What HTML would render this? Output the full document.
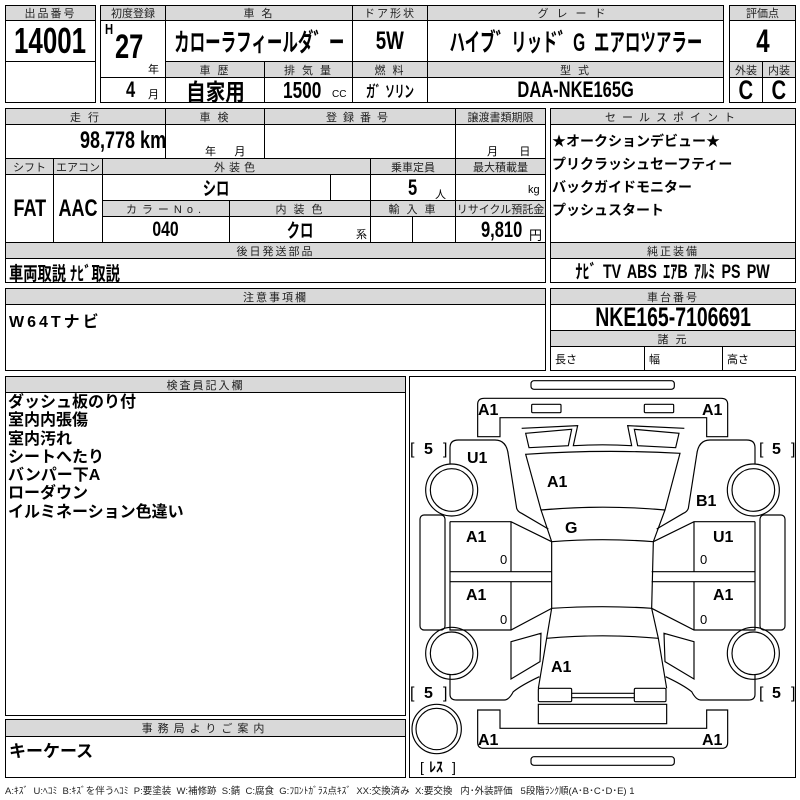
<!DOCTYPE html>
<html><head><meta charset="utf-8">
<style>
*{margin:0;padding:0;box-sizing:border-box}
body{width:800px;height:800px;background:#fff;position:relative;overflow:hidden;font-family:"Liberation Sans","Noto Sans CJK JP",sans-serif;color:#000}
.c{position:absolute;border:1px solid #000;background:#fff;display:flex;align-items:center;justify-content:center;white-space:nowrap;overflow:hidden}
.h{background:#d9d9d9;font-size:11px;color:#222;letter-spacing:2px;font-weight:normal}
.v{font-weight:bold}
.s{display:inline-block;transform:scaleX(0.75);transform-origin:center}
.t{position:absolute;white-space:nowrap}
.n{font-weight:bold;transform:scaleX(0.75);transform-origin:left center}
</style></head><body>

<div class="c h" style="left:5px;top:5px;width:91px;height:16px">出品番号</div>
<div class="c v" style="left:5px;top:20px;width:91px;height:42px;font-size:36px"><span class="s" style="transform:scaleX(0.72)">14001</span></div>
<div class="c" style="left:5px;top:61px;width:91px;height:42px"></div>

<div class="c h" style="left:100px;top:5px;width:66px;height:16px;letter-spacing:0">初度登録</div>
<div class="c h" style="left:165px;top:5px;width:188px;height:16px">車 名</div>
<div class="c h" style="left:352px;top:5px;width:76px;height:16px">ドア形状</div>
<div class="c h" style="left:427px;top:5px;width:297px;height:16px;letter-spacing:8px">グレード</div>
<div class="c" style="left:100px;top:20px;width:66px;height:58px"></div>
<div class="t n" style="left:105px;top:21px;font-size:15px">H</div>
<div class="t n" style="left:115px;top:28px;font-size:34px">27</div>
<div class="t" style="left:148px;top:61px;font-size:11px">年</div>
<div class="c v" style="left:165px;top:20px;width:188px;height:42px;font-size:25px"><span class="s" style="transform:scaleX(0.62)">カローラフィールダ゛ー</span></div>
<div class="c v" style="left:352px;top:20px;width:76px;height:42px;font-size:25px"><span class="s">5W</span></div>
<div class="c v" style="left:427px;top:20px;width:297px;height:42px;font-size:25px"><span class="s" style="transform:scaleX(0.62)">ハイブ゛リッド゛G&nbsp; エアロツアラー</span></div>
<div class="c h" style="left:165px;top:61px;width:100px;height:17px">車 歴</div>
<div class="c h" style="left:264px;top:61px;width:89px;height:17px">排 気 量</div>
<div class="c h" style="left:352px;top:61px;width:76px;height:17px">燃 料</div>
<div class="c h" style="left:427px;top:61px;width:297px;height:17px">型 式</div>
<div class="c" style="left:100px;top:77px;width:66px;height:26px"></div>
<div class="t n" style="left:126px;top:77px;font-size:22px">4</div>
<div class="t" style="left:148px;top:86px;font-size:11px">月</div>
<div class="c v" style="left:165px;top:77px;width:100px;height:26px;font-size:23px"><span class="s" style="transform:scaleX(0.85)">自家用</span></div>
<div class="c" style="left:264px;top:77px;width:89px;height:26px"></div>
<div class="t n" style="left:283px;top:77px;font-size:23px">1500</div>
<div class="t" style="left:332px;top:89px;font-size:10px">CC</div>
<div class="c v" style="left:352px;top:77px;width:76px;height:26px;font-size:16px"><span class="s" style="transform:scaleX(0.6)">ガ゛ソリン</span></div>
<div class="c v" style="left:427px;top:77px;width:297px;height:26px;font-size:22px"><span class="s">DAA-NKE165G</span></div>

<div class="c h" style="left:729px;top:5px;width:67px;height:16px;letter-spacing:0">評価点</div>
<div class="c v" style="left:729px;top:20px;width:67px;height:42px;font-size:32px"><span class="s">4</span></div>
<div class="c h" style="left:729px;top:61px;width:34px;height:17px;letter-spacing:0">外装</div>
<div class="c h" style="left:762px;top:61px;width:34px;height:17px;letter-spacing:0">内装</div>
<div class="c v" style="left:729px;top:77px;width:34px;height:26px;font-size:27px"><span class="s">C</span></div>
<div class="c v" style="left:762px;top:77px;width:34px;height:26px;font-size:27px"><span class="s">C</span></div>

<div class="c h" style="left:5px;top:108px;width:161px;height:17px">走 行</div>
<div class="c h" style="left:165px;top:108px;width:100px;height:17px">車 検</div>
<div class="c h" style="left:264px;top:108px;width:192px;height:17px;letter-spacing:6px">登録番号</div>
<div class="c h" style="left:455px;top:108px;width:91px;height:17px;letter-spacing:0">譲渡書類期限</div>
<div class="c" style="left:5px;top:124px;width:161px;height:35px"></div>
<div class="t n" style="left:80px;top:127px;font-size:24px">98,778 km</div>
<div class="c" style="left:165px;top:124px;width:100px;height:35px"></div>
<div class="t" style="left:205px;top:143px;font-size:11px">年&nbsp;&nbsp;&nbsp;&nbsp;&nbsp;&nbsp;月</div>
<div class="c" style="left:264px;top:124px;width:192px;height:35px"></div>
<div class="c" style="left:455px;top:124px;width:91px;height:35px"></div>
<div class="t" style="left:487px;top:143px;font-size:11px">月&nbsp;&nbsp;&nbsp;&nbsp;&nbsp;&nbsp;&nbsp;日</div>

<div class="c h" style="left:5px;top:158px;width:49px;height:17px;letter-spacing:0">シフト</div>
<div class="c h" style="left:53px;top:158px;width:50px;height:17px;letter-spacing:0">エアコン</div>
<div class="c h" style="left:102px;top:158px;width:269px;height:17px;letter-spacing:4px">外装色</div>
<div class="c h" style="left:370px;top:158px;width:86px;height:17px;letter-spacing:0">乗車定員</div>
<div class="c h" style="left:455px;top:158px;width:91px;height:17px;letter-spacing:0">最大積載量</div>
<div class="c v" style="left:5px;top:174px;width:49px;height:69px;font-size:24px"><span class="s">FAT</span></div>
<div class="c v" style="left:53px;top:174px;width:50px;height:69px;font-size:24px"><span class="s">AAC</span></div>
<div class="c v" style="left:102px;top:174px;width:229px;height:27px;font-size:19px"><span class="s" style="transform:scaleX(0.7)">シロ</span></div>
<div class="c" style="left:330px;top:174px;width:41px;height:27px"></div>
<div class="c" style="left:370px;top:174px;width:86px;height:27px"></div>
<div class="t n" style="left:408px;top:175px;font-size:22px">5</div>
<div class="t" style="left:435px;top:186px;font-size:11px">人</div>
<div class="c" style="left:455px;top:174px;width:91px;height:27px"></div>
<div class="t" style="left:528px;top:184px;font-size:11px">kg</div>
<div class="c h" style="left:102px;top:200px;width:128px;height:17px;letter-spacing:5px">カラーNo.</div>
<div class="c h" style="left:229px;top:200px;width:142px;height:17px">内 装 色</div>
<div class="c h" style="left:370px;top:200px;width:86px;height:17px">輸 入 車</div>
<div class="c h" style="left:455px;top:200px;width:91px;height:17px;letter-spacing:0">リサイクル預託金</div>
<div class="c v" style="left:102px;top:216px;width:128px;height:27px;font-size:21px"><span class="s">040</span></div>
<div class="c v" style="left:229px;top:216px;width:142px;height:27px;font-size:19px"><span class="s" style="transform:scaleX(0.7)">クロ</span></div>
<div class="t" style="left:356px;top:226px;font-size:11px">系</div>
<div class="c" style="left:370px;top:216px;width:43px;height:27px"></div>
<div class="c" style="left:412px;top:216px;width:44px;height:27px"></div>
<div class="c" style="left:455px;top:216px;width:91px;height:27px"></div>
<div class="t n" style="left:481px;top:217px;font-size:22px">9,810</div>
<div class="t" style="left:529px;top:225px;font-size:13px">円</div>

<div class="c h" style="left:5px;top:242px;width:541px;height:17px">後日発送部品</div>
<div class="c" style="left:5px;top:258px;width:541px;height:25px"></div>
<div class="t n" style="left:9px;top:259px;font-size:19px">車両取説 ﾅﾋﾞ取説</div>

<div class="c h" style="left:550px;top:108px;width:246px;height:17px;letter-spacing:6px">セールスポイント</div>
<div class="c" style="left:550px;top:124px;width:246px;height:119px"></div>
<div class="t" style="left:552px;top:130px;font-size:14px;font-weight:bold;line-height:23px">★オークションデビュー★<br>プリクラッシュセーフティー<br>バックガイドモニター<br>プッシュスタート</div>
<div class="c h" style="left:550px;top:242px;width:246px;height:17px">純正装備</div>
<div class="c v" style="left:550px;top:258px;width:246px;height:25px;font-size:19px;word-spacing:3px"><span class="s" style="transform:scaleX(0.75)">ﾅﾋﾞ TV ABS ｴｱB ｱﾙﾐ PS PW</span></div>

<div class="c h" style="left:5px;top:288px;width:541px;height:17px">注意事項欄</div>
<div class="c" style="left:5px;top:304px;width:541px;height:67px"></div>
<div class="t" style="left:9px;top:308px;font-size:16px;font-weight:bold;letter-spacing:3px">W64Tナビ</div>

<div class="c h" style="left:550px;top:288px;width:246px;height:17px">車台番号</div>
<div class="c v" style="left:550px;top:304px;width:246px;height:27px;font-size:27px"><span class="s" style="transform:scaleX(0.72)">NKE165-7106691</span></div>
<div class="c h" style="left:550px;top:330px;width:246px;height:17px">諸 元</div>
<div class="c" style="left:550px;top:346px;width:95px;height:25px;justify-content:flex-start;padding-left:4px;font-size:11px">長さ</div>
<div class="c" style="left:644px;top:346px;width:79px;height:25px;justify-content:flex-start;padding-left:4px;font-size:11px">幅</div>
<div class="c" style="left:722px;top:346px;width:74px;height:25px;justify-content:flex-start;padding-left:4px;font-size:11px">高さ</div>

<div class="c h" style="left:5px;top:376px;width:401px;height:17px">検査員記入欄</div>
<div class="c" style="left:5px;top:392px;width:401px;height:324px"></div>
<div class="t" style="left:8px;top:394px;font-size:16px;font-weight:bold;line-height:18.3px">ダッシュ板のり付<br>室内内張傷<br>室内汚れ<br>シートへたり<br>バンパー下A<br>ローダウン<br>イルミネーション色違い</div>

<div class="c h" style="left:5px;top:719px;width:401px;height:18px;letter-spacing:5px">事務局よりご案内</div>
<div class="c" style="left:5px;top:736px;width:401px;height:42px"></div>
<div class="t" style="left:9px;top:737px;font-size:17px;font-weight:bold">キーケース</div>

<div class="t" style="left:5px;top:783px;font-size:9.5px;color:#222;letter-spacing:0">A:ｷｽﾞ&nbsp; U:ﾍｺﾐ&nbsp; B:ｷｽﾞを伴うﾍｺﾐ&nbsp; P:要塗装&nbsp; W:補修跡&nbsp; S:錆&nbsp; C:腐食&nbsp; G:ﾌﾛﾝﾄｶﾞﾗｽ点ｷｽﾞ&nbsp; XX:交換済み&nbsp; X:要交換&nbsp;&nbsp; 内･外装評価&nbsp;&nbsp; 5段階ﾗﾝｸ順(A･B･C･D･E) 1</div>

<div class="c" style="left:409px;top:376px;width:387px;height:402px"></div>
<svg style="position:absolute;left:0;top:0" width="800" height="800">
<g transform="translate(405,375) scale(0.33333)" fill="none" stroke="#000" stroke-width="3.5">
<rect x="378" y="17" width="430" height="26" rx="9"/>
<path d="M218,88 Q218,70 238,70 L948,70 Q968,70 968,88 L968,185 L905,185 L905,128 L285,128 L285,185 L218,185 Z"/>
<rect x="380" y="88" width="88" height="25" rx="3"/>
<rect x="718" y="88" width="88" height="25" rx="3"/>
<path d="M350,160 L518,152 L505,212 Q593,207 680,212 L668,152 L838,160"/>
<path d="M362,175 L500,163 L490,212 L372,218 Z"/>
<path d="M688,163 L822,175 L812,218 L698,212 Z"/>
<path d="M362,238 Q593,222 825,235 L780,405 Q593,388 408,405 Z"/>
<path d="M408,405 L440,500 Q593,488 745,500 L780,405"/>
<path d="M440,500 L440,700 Q593,690 740,700 L745,500"/>
<path d="M440,700 L425,790 Q593,775 760,790 L740,700"/>
<path d="M425,790 L400,940 M760,790 L785,940"/>
<rect x="400" y="940" width="100" height="40" rx="4"/>
<rect x="688" y="940" width="95" height="40" rx="4"/>
<path d="M500,955 L688,955 M500,968 L688,968"/>
<rect x="400" y="988" width="385" height="58"/>
<path d="M218,1005 L285,1005 L285,1060 L905,1060 L905,1005 L968,1005 L968,1102 Q968,1120 950,1120 L236,1120 Q218,1120 218,1102 Z"/>
<rect x="378" y="1145" width="430" height="26" rx="9"/>
<path d="M135,268 L135,218 Q135,195 160,195 L270,195 Q305,195 310,240 L335,400 Q338,410 350,415 L430,462"/>
<path d="M135,440 L318,440 L440,500 M318,440 L318,590 M135,440 L135,765 L318,765 L440,700 M318,620 L318,765 M135,590 L440,590 M135,620 L440,620"/>
<rect x="45" y="420" width="75" height="345" rx="12"/>
<path d="M318,800 L408,775 L405,860 L318,912 Z"/>
<path d="M135,900 L135,958 Q135,975 155,975 L298,975 Q312,975 325,950 Q350,930 403,905"/>
<path d="M1050,268 L1050,218 Q1050,195 1025,195 L915,195 Q880,195 875,240 L850,400 Q847,410 835,415 L755,462"/>
<path d="M1050,440 L867,440 L745,500 M867,440 L867,590 M1050,440 L1050,765 L867,765 L740,700 M867,620 L867,765 M1050,590 L740,590 M1050,620 L740,620"/>
<rect x="1065" y="420" width="75" height="345" rx="12"/>
<path d="M867,800 L777,775 L780,860 L867,912 Z"/>
<path d="M1050,900 L1050,958 Q1050,975 1030,975 L887,975 Q873,975 860,950 Q835,930 782,905"/>
<circle cx="140" cy="345" r="78"/><circle cx="140" cy="345" r="64"/>
<circle cx="140" cy="835" r="78"/><circle cx="140" cy="835" r="64"/>
<circle cx="1045" cy="345" r="78"/><circle cx="1045" cy="345" r="64"/>
<circle cx="1045" cy="835" r="78"/><circle cx="1045" cy="835" r="64"/>
<circle cx="95" cy="1062" r="74"/><circle cx="95" cy="1062" r="62"/>
</g>
<g font-family="Liberation Sans, Noto Sans CJK JP, sans-serif" font-weight="bold" font-size="16" fill="#000">
<text x="478" y="415">A1</text><text x="702" y="415">A1</text>
<text x="467" y="463">U1</text><text x="547" y="487">A1</text>
<text x="696" y="506">B1</text><text x="565" y="533">G</text>
<text x="466" y="542">A1</text><text x="713" y="542">U1</text>
<text x="466" y="600">A1</text><text x="713" y="600">A1</text>
<text x="551" y="672">A1</text>
<text x="478" y="745">A1</text><text x="702" y="745">A1</text>
<text x="410" y="454" font-weight="normal">[</text><text x="424" y="454">5</text><text x="443" y="454" font-weight="normal">]</text>
<text x="759" y="454" font-weight="normal">[</text><text x="772" y="454">5</text><text x="791" y="454" font-weight="normal">]</text>
<text x="410" y="698" font-weight="normal">[</text><text x="424" y="698">5</text><text x="443" y="698" font-weight="normal">]</text>
<text x="759" y="698" font-weight="normal">[</text><text x="772" y="698">5</text><text x="791" y="698" font-weight="normal">]</text>
<text x="420" y="772" font-size="14" font-weight="normal">[</text><text x="429" y="772" font-size="14">ﾚｽ</text><text x="452" y="772" font-size="14" font-weight="normal">]</text>
</g>
<g font-family="Liberation Sans, sans-serif" font-size="13" fill="#000">
<text x="500" y="564">0</text><text x="700" y="564">0</text>
<text x="500" y="624">0</text><text x="700" y="624">0</text>
</g>
</svg>
</body></html>
